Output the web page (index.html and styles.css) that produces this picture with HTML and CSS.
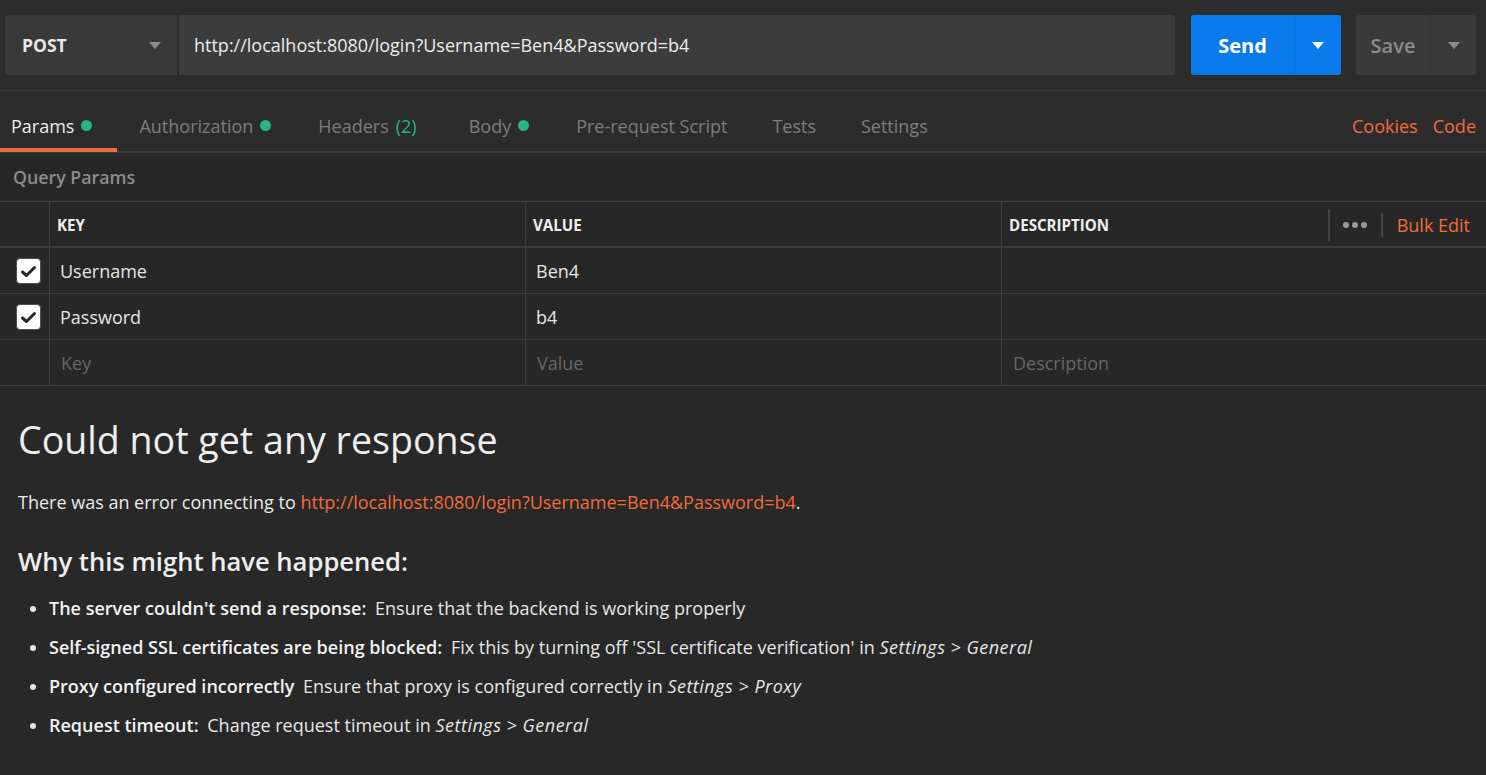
FILE: index.html
```html
<!DOCTYPE html>
<html>
<head>
<meta charset="utf-8">
<link rel="stylesheet" href="styles.css">
</head>
<body>
<div class="app">
  <div class="request-bar">
    <div class="method">
      <span>POST</span>
      <span class="caret grey"></span>
    </div>
    <div class="url">http://localhost:8080/login?Username=Ben4&amp;Password=b4</div>
    <div class="send">
      <span class="send-main">Send</span>
      <span class="send-drop"><span class="caret white"></span></span>
    </div>
    <div class="save">
      <span class="save-main">Save</span>
      <span class="save-drop"><span class="caret grey"></span></span>
    </div>
  </div>

  <div class="tabs">
    <div class="tab active">Params <span class="dot"></span></div>
    <div class="tab wide">Authorization <span class="dot"></span></div>
    <div class="tab tab-headers">Headers <span class="count">(2)</span></div>
    <div class="tab wide">Body <span class="dot"></span></div>
    <div class="tab">Pre-request Script</div>
    <div class="tab">Tests</div>
    <div class="tab">Settings</div>
    <div class="tab-links">
      <span>Cookies</span>
      <span>Code</span>
    </div>
  </div>

  <div class="params">
    <div class="section-title">Query Params</div>
    <div class="table">
      <div class="row head">
        <div class="cell check"></div>
        <div class="cell">KEY</div>
        <div class="cell">VALUE</div>
        <div class="cell desc-head">
          <span>DESCRIPTION</span>
          <div class="head-tools">
            <span class="vsep"></span>
            <span class="dots"><i></i><i></i><i></i></span>
            <span class="vsep short"></span>
            <span class="bulk">Bulk Edit</span>
          </div>
        </div>
      </div>
      <div class="row">
        <div class="cell check"><span class="box"><svg width="17" height="13" viewBox="0 0 17 13"><path d="M2.5 7 L6.5 10.5 L14.5 2.5" fill="none" stroke="#262626" stroke-width="3" stroke-linecap="round" stroke-linejoin="round"/></svg></span></div>
        <div class="cell val">Username</div>
        <div class="cell val">Ben4</div>
        <div class="cell"></div>
      </div>
      <div class="row">
        <div class="cell check"><span class="box"><svg width="17" height="13" viewBox="0 0 17 13"><path d="M2.5 7 L6.5 10.5 L14.5 2.5" fill="none" stroke="#262626" stroke-width="3" stroke-linecap="round" stroke-linejoin="round"/></svg></span></div>
        <div class="cell val">Password</div>
        <div class="cell val">b4</div>
        <div class="cell"></div>
      </div>
      <div class="row">
        <div class="cell check"></div>
        <div class="cell ph">Key</div>
        <div class="cell ph">Value</div>
        <div class="cell ph">Description</div>
      </div>
    </div>
  </div>

  <div class="response">
    <h1>Could not get any response</h1>
    <p class="lead">There was an error connecting to <span class="link">http://localhost:8080/login?Username=Ben4&amp;Password=b4</span>.</p>
    <h2>Why this might have happened:</h2>
    <ul>
      <li><b>The server couldn't send a response:</b> Ensure that the backend is working properly</li>
      <li><b>Self-signed SSL certificates are being blocked:</b> Fix this by turning off 'SSL certificate verification' in <i>Settings &gt; General</i></li>
      <li><b>Proxy configured incorrectly</b> Ensure that proxy is configured correctly in <i>Settings &gt; Proxy</i></li>
      <li><b>Request timeout:</b> Change request timeout in <i>Settings &gt; General</i></li>
    </ul>
  </div>
</div>
</body>
</html>
```
FILE: styles.css
```css
* { box-sizing: border-box; }
html, body { margin: 0; padding: 0; }
body {
  background: #282828;
  font-family: "Open Sans", "Noto Sans", sans-serif;
  color: #e0e0e0;
  width: 1486px;
  height: 775px;
  overflow: hidden;
}
.app { display: flex; flex-direction: column; }

.request-bar {
  background: #2c2c2c;
  display: flex;
  padding: 15px 10px 15px 5px;
  height: 91px;
  border-bottom: 1px solid #3c3c3c;
}
.method {
  width: 172px;
  height: 60px;
  background: #393939;
  border-radius: 3px 0 0 3px;
  display: flex;
  align-items: center;
  justify-content: space-between;
  padding: 0 16px 0 17px;
  font-size: 17.5px;
  font-weight: 700;
  color: #e8e8e8;
}
.url {
  flex: 1;
  height: 60px;
  margin-left: 2px;
  background: #3c3c3c;
  border-radius: 0 3px 3px 0;
  display: flex;
  align-items: center;
  padding-left: 15px;
  font-size: 18px;
  color: #ececec;
}
.caret {
  display: inline-block;
  width: 0; height: 0;
  border-left: 6px solid transparent;
  border-right: 6px solid transparent;
  border-top: 7px solid #8a8a8a;
}
.caret.white { border-top-color: #ffffff; }
.send {
  margin-left: 16px;
  width: 150px;
  height: 60px;
  background: #097bed;
  border-radius: 3px;
  display: flex;
  color: #fff;
  font-weight: 700;
  font-size: 20px;
}
.send-main { width: 104px; display: flex; align-items: center; justify-content: center; border-right: 1px solid #0a6fd4; }
.send-drop { flex: 1; display: flex; align-items: center; justify-content: center; }
.save {
  margin-left: 15px;
  width: 120px;
  height: 60px;
  background: #3a3a3a;
  border-radius: 3px;
  display: flex;
  color: #8c8c8c;
  font-weight: 600;
  font-size: 20px;
}
.save-main { width: 75px; display: flex; align-items: center; justify-content: center; border-right: 1px solid #333; }
.save-drop { flex: 1; display: flex; align-items: center; justify-content: center; }

.tabs {
  background: #2c2c2c;
  height: 62px;
  display: flex;
  align-items: stretch;
  border-bottom: 2px solid #3c3c3c;
}
.tab {
  display: flex;
  align-items: center;
  padding: 12px 23px 0 22px;
  font-size: 18px;
  color: #7c7c7c;
  border-bottom: 4px solid transparent;
  margin-bottom: -1px;
  white-space: nowrap;
}
.tab:first-child { padding-left: 11px; padding-right: 25px; }
.tab.wide { padding-right: 25px; }
.tab.tab-headers { padding-right: 30px; }
.tab.active { color: #ececec; border-bottom-color: #f26b3a; }
.dot {
  display: inline-block;
  width: 11px; height: 11px;
  border-radius: 50%;
  background: #26b47f;
  margin-left: 7px;
}
.count { color: #26b47f; margin-left: 7px; }
.tab-links {
  margin-left: auto;
  display: flex;
  align-items: center;
  gap: 15px;
  padding-right: 10px;
  padding-top: 9px;
  font-size: 18px;
  color: #f26b3a;
}

.params { background: #272727; }
.section-title {
  height: 48px;
  padding: 12px 0 0 13px;
  font-size: 17.8px;
  font-weight: 600;
  color: #8c8c8c;
}
.table { border-top: 1px solid #3c3c3c; }
.row {
  display: grid;
  grid-template-columns: 49px 476px 476px 1fr;
  height: 46px;
  border-bottom: 1px solid #3c3c3c;
}
.row.head { height: 46px; border-bottom: 2px solid #3c3c3c; }
.cell {
  border-left: 1px solid #3c3c3c;
  display: flex;
  align-items: center;
  padding-left: 10px;
  font-size: 18px;
  min-width: 0;
}
.cell.check { border-left: none; padding-left: 16px; padding-top: 1px; }
.head .cell { font-size: 15.1px; font-weight: 700; color: #efefef; padding-left: 7px; padding-top: 1px; }
.cell.val { color: #e6e6e6; }
.cell.ph { color: #666; padding-left: 11px; }
.box {
  width: 25px; height: 26px;
  background: #fff;
  border-radius: 4px;
  border: 1px solid #505050;
  display: flex;
  align-items: center;
  justify-content: center;
}
.desc-head { justify-content: space-between; }
.head-tools { display: flex; align-items: center; height: 100%; }
.vsep { width: 2px; height: 32px; background: #444; }
.vsep.short { height: 24px; }
.dots { display: flex; gap: 3px; padding: 0 14px 0 13px; }
.dots i { width: 6px; height: 6px; border-radius: 50%; background: #9a9a9a; display: block; }
.bulk { color: #f26b3a; font-weight: 400; font-size: 18px; padding: 0 16px 0 14px; }

.response {
  background: #282828;
  padding: 18px 18px 0 18px;
  height: 390px;
}
h1 {
  margin: 0;
  font-size: 37.6px;
  font-weight: 400;
  color: #eeeeee;
  line-height: 72px;
}
.lead { margin: 14px 0 0 0; font-size: 18px; color: #eaeaea; line-height: 24px; }
.link { color: #f26b3a; }
h2 {
  margin: 30px 0 0 0;
  font-size: 25.6px;
  font-weight: 600;
  color: #eeeeee;
  line-height: 36px;
}
ul { margin: 9px 0 0 0; padding-left: 31px; }
li {
  font-size: 18px;
  color: #e6e6e6;
  line-height: 39px;
}
li b { font-weight: 600; color: #f2f2f2; margin-right: 4px; }
li i { letter-spacing: 0.5px; }
```
